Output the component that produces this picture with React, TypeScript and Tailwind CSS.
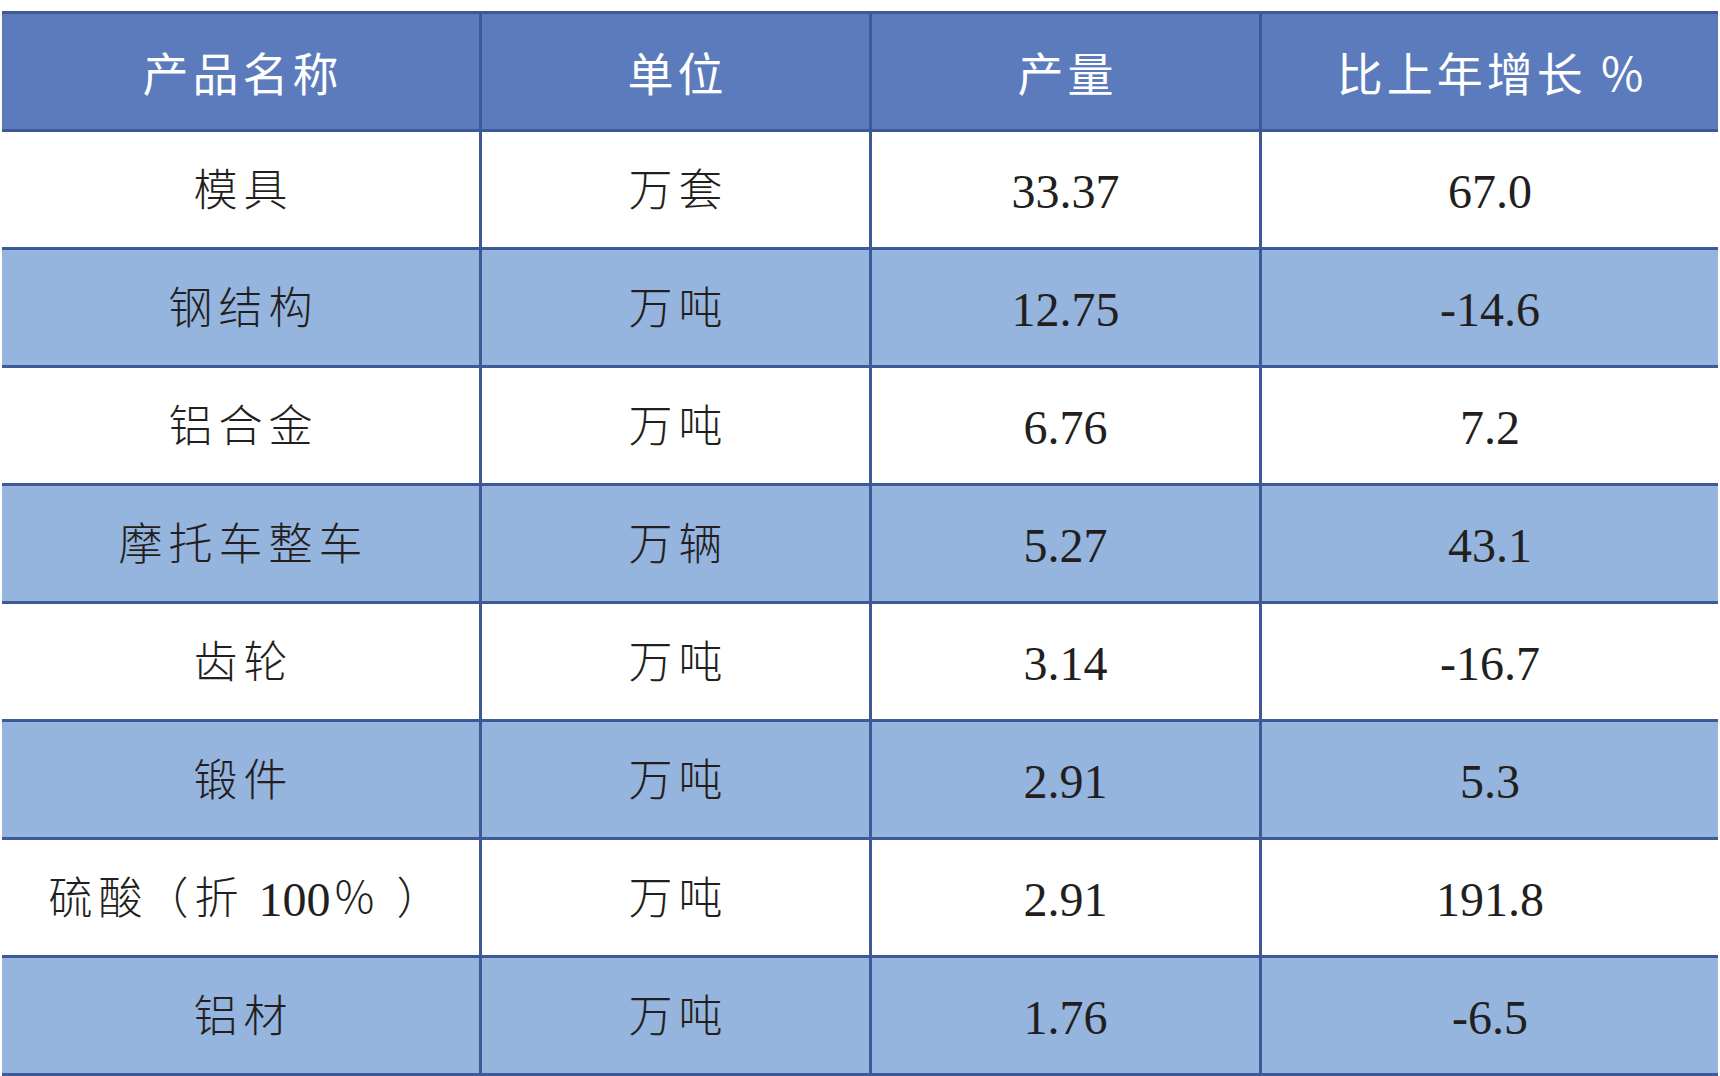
const ROWS = [
  { name: "模具", unit: "万套", output: "33.37", growth: "67.0" },
  { name: "钢结构", unit: "万吨", output: "12.75", growth: "-14.6" },
  { name: "铝合金", unit: "万吨", output: "6.76", growth: "7.2" },
  { name: "摩托车整车", unit: "万辆", output: "5.27", growth: "43.1" },
  { name: "齿轮", unit: "万吨", output: "3.14", growth: "-16.7" },
  { name: "锻件", unit: "万吨", output: "2.91", growth: "5.3" },
  { name: "硫酸", unit: "万吨", output: "2.91", growth: "191.8", note: true },
  { name: "铝材", unit: "万吨", output: "1.76", growth: "-6.5" },
];

const GRID = "grid grid-cols-[480px_390px_390px_456px] h-[118px] border-b-[3px] border-[#3d5a97]";
const CELL = "flex items-center justify-center border-r-[3px] border-[#3d5a97]";
const CJK = "[font-family:'Liberation_Serif','Noto_Sans_CJK_SC',serif] font-light text-[44px] tracking-[6px] text-[#231f20] pt-[5px]";
const NUM = "[font-family:'Liberation_Serif',serif] text-[48px] text-[#231f20] pt-[5px]";

export default function App() {
  return (
    <div className="bg-white w-[1720px] h-[1076px] overflow-hidden pt-[11px] pl-[2px]">
      <div className="w-[1716px] border-t-[3px] border-[#3d5a97]">
        {/* Header */}
        <div
          className={`${GRID} bg-[#5b7bbd] text-white text-[46px] tracking-[4px] [font-family:'Noto_Sans_CJK_SC',sans-serif]`}
        >
          <div className={`${CELL} pl-[4px]`}>产品名称</div>
          <div className={`${CELL} pl-[4px]`}>单位</div>
          <div className={`${CELL} pl-[4px]`}>产量</div>
          <div className="flex items-center justify-center pl-[4px]">比上年增长 %</div>
        </div>

        {ROWS.map((r, i) => (
          <div key={i} className={`${GRID} ${i % 2 === 1 ? "bg-[#95b4de]" : "bg-white"}`}>
            <div className={`${CELL} ${CJK} ${r.note ? "pl-[14px]" : "pl-[6px]"}`}>
              {r.name}
              {r.note && (
                <>
                  <span className="-ml-[4px]">（折</span>
                  <span className="tracking-normal text-[48px] ml-[14px] mr-[2px]">100</span>％<span className="ml-[14px]">）</span>
                </>
              )}
            </div>
            <div className={`${CELL} ${CJK} pl-[6px]`}>{r.unit}</div>
            <div className={`${CELL} ${NUM}`}>{r.output}</div>
            <div className={`flex items-center justify-center ${NUM}`}>{r.growth}</div>
          </div>
        ))}
      </div>
    </div>
  );
}
